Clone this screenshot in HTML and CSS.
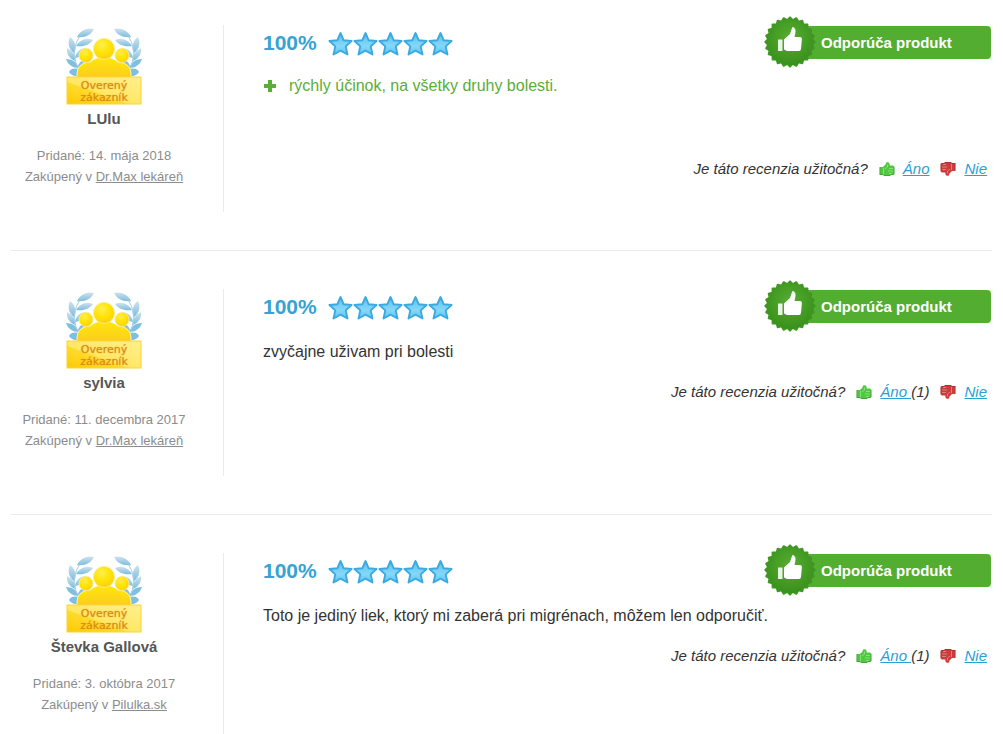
FILE: index.html
```html
<!DOCTYPE html>
<html lang="sk">
<head>
<meta charset="utf-8">
<meta name="viewport" content="width=device-width, initial-scale=1">
<title>Recenzie</title>
<link rel="stylesheet" href="styles.css">
</head>
<body>
<svg class="sprite" aria-hidden="true">
  <defs>
    <linearGradient id="g-star" x1="0" y1="0" x2="0" y2="1"><stop offset="0" stop-color="#5cc0ee"/><stop offset=".6" stop-color="#85d8f8"/><stop offset="1" stop-color="#5fc6f2"/></linearGradient>
    <radialGradient id="g-seal" cx=".5" cy=".4" r=".6"><stop offset="0" stop-color="#58ad32"/><stop offset="1" stop-color="#38911b"/></radialGradient>
    <radialGradient id="g-head" cx=".4" cy=".3" r=".75"><stop offset="0" stop-color="#fff04a"/><stop offset=".6" stop-color="#ffe000"/><stop offset="1" stop-color="#fbcb1c"/></radialGradient>
    <linearGradient id="g-body" x1="0" y1="0" x2="0" y2="1"><stop offset="0" stop-color="#ffe60c"/><stop offset="1" stop-color="#fbcb1f"/></linearGradient>
    <linearGradient id="g-banner" x1="0" y1="1" x2="1" y2="0"><stop offset="0" stop-color="#fdc904"/><stop offset=".4" stop-color="#ffdb2c"/><stop offset=".42" stop-color="#ffe762"/><stop offset="1" stop-color="#fff08f"/></linearGradient>
    <linearGradient id="g-leaf" x1="0" y1="0" x2="0" y2="1"><stop offset="0" stop-color="#d3e3ec"/><stop offset="1" stop-color="#78bce2"/></linearGradient>
  </defs>
  <symbol id="laurel" viewBox="0 0 38 52">
    <g fill="url(#g-leaf)">
      <path d="M28 1C20 -1 14 3 11 9 19 10 25 7 28 1Z"/>
      <path d="M27 12C20 9 14 12 10 18 18 19 23 17 27 12Z"/>
      <path d="M4 9C1 15 3 21 8 25 11 19 9 12 4 9Z"/>
      <path d="M20 20C14 20 10 24 9 30 15 29 19 26 20 20Z"/>
      <path d="M1 20C0 26 4 31 9 33 10 27 6 22 1 20Z"/>
    </g>
    <g fill="#7fbfe2">
      <path d="M0 31C2 37 7 40 13 40 11 34 6 31 0 31Z"/>
      <path d="M20 31C14 32 11 37 12 43 18 42 20 37 20 31Z"/>
      <path d="M3 44C6 39 12 40 16 44 13 50 6 49 3 44Z"/>
    </g>
    <path d="M17 4Q1 22 15 47" fill="none" stroke="#a6cfe4" stroke-width="1"/>
  </symbol>
  <symbol id="verified" viewBox="0 0 76 78">
    <use href="#laurel" width="38" height="52"/>
    <use href="#laurel" width="38" height="52" transform="translate(76 0) scale(-1 1)"/>
    <path d="M11 50V46Q11 37 20 34.500H56Q65 37 65 46V50Z" fill="url(#g-body)" stroke="#fff3a8"/>
    <circle cx="20" cy="27.500" r="7" fill="url(#g-head)" stroke="#ffec80"/>
    <circle cx="56" cy="27.500" r="7" fill="url(#g-head)" stroke="#ffec80"/>
    <path d="M21 50V42Q21 33 32 30H44Q55 33 55 42V50Z" fill="url(#g-body)"/>
    <circle cx="38" cy="21" r="10.500" fill="url(#g-head)" stroke="#ffec80"/>
    <rect x="1" y="49" width="74" height="27" fill="url(#g-banner)" stroke="#fbd33f"/>
  </symbol>
  <symbol id="star" viewBox="0 0 25 26">
    <path d="M12.500 2 15.700 9.300 23.600 10 17.700 15.400 19.500 23.500 12.500 19.600 5.500 23.500 7.300 15.400 1.400 10 9.300 9.300Z" fill="url(#g-star)" stroke="#3ba9e2" stroke-width="1.900" stroke-linejoin="round"/>
  </symbol>
  <symbol id="seal" viewBox="0 0 52 52">
    <g fill="#3f9622">
      <rect id="sq" x="7.600" y="7.600" width="36.800" height="36.800" rx="1"/>
      <use href="#sq" transform="rotate(15 26 26)"/><use href="#sq" transform="rotate(30 26 26)"/><use href="#sq" transform="rotate(45 26 26)"/><use href="#sq" transform="rotate(60 26 26)"/><use href="#sq" transform="rotate(75 26 26)"/>
    </g>
    <circle cx="26" cy="26" r="23" fill="url(#g-seal)"/>
    <path d="M14 23.500H18.500V35H14Z" fill="#e9f5e4"/>
    <path d="M20 23.500 26 18 28 12Q28.500 10.500 30 11.500 32 13 31.500 16L30.500 21H36Q38 21 37.900 23L37 33Q36.800 35 35 35H23L20 33.500Z" fill="#fff"/>
  </symbol>
  <symbol id="plus" viewBox="0 0 14 14"><path d="M5 1H9V5H13V9H9V13H5V9H1V5H5Z" fill="#5aae37"/></symbol>
  <symbol id="thumb" viewBox="0 0 16 16">
    <path d="M.500 6H4L6.500 3.500 7 1.500Q9.500.500 10.500 2.500L10.800 4.500H14Q15.800 5 15.500 7V13L14.500 14H12L11 15H5L4 14H.500Z" fill="currentColor"/>
    <path d="M.900 6.500V13.500H4M5 14.500H11L12 13.500H14.500L15 12.500V6" fill="none" stroke="#000" stroke-opacity=".16"/>
    <path d="M4.500 7V13M10 7.500H14M9 10H14M10 12.500H13M8.500 3.500V6L6 8" stroke="#fff" stroke-opacity=".35" fill="none"/>
  </symbol>
</svg>

<main class="reviews">
  <article class="review">
    <aside class="author">
      <div class="verified"><svg aria-hidden="true"><use href="#verified"/></svg><span class="verified-text">Overený zákazník</span></div>
      <strong class="name">LUlu</strong>
      <p class="meta">Pridané: 14. mája 2018<br>Zakúpený v <a href="#">Dr.Max lekáreň</a></p>
    </aside>
    <div class="content">
      <header class="top">
        <span class="score">100%</span>
        <span class="stars"><svg><use href="#star"/></svg><svg><use href="#star"/></svg><svg><use href="#star"/></svg><svg><use href="#star"/></svg><svg><use href="#star"/></svg></span>
        <div class="recommend"><svg class="seal"><use href="#seal"/></svg><strong class="ribbon">Odporúča produkt</strong></div>
      </header>
      <ul class="pros"><li><svg><use href="#plus"/></svg>rýchly účinok, na všetky druhy bolesti.</li></ul>
      <div class="useful"><span class="question">Je táto recenzia užitočná?</span><svg class="up"><use href="#thumb"/></svg><span class="vote"><a href="#">Áno</a></span><svg class="down"><use href="#thumb"/></svg><span class="vote"><a href="#">Nie</a></span></div>
    </div>
  </article>

  <article class="review">
    <aside class="author">
      <div class="verified"><svg aria-hidden="true"><use href="#verified"/></svg><span class="verified-text">Overený zákazník</span></div>
      <strong class="name">sylvia</strong>
      <p class="meta">Pridané: 11. decembra 2017<br>Zakúpený v <a href="#">Dr.Max lekáreň</a></p>
    </aside>
    <div class="content">
      <header class="top">
        <span class="score">100%</span>
        <span class="stars"><svg><use href="#star"/></svg><svg><use href="#star"/></svg><svg><use href="#star"/></svg><svg><use href="#star"/></svg><svg><use href="#star"/></svg></span>
        <div class="recommend"><svg class="seal"><use href="#seal"/></svg><strong class="ribbon">Odporúča produkt</strong></div>
      </header>
      <p class="text">zvyčajne uživam pri bolesti</p>
      <div class="useful"><span class="question">Je táto recenzia užitočná?</span><svg class="up"><use href="#thumb"/></svg><span class="vote"><a href="#">Áno&nbsp;</a>(1)</span><svg class="down"><use href="#thumb"/></svg><span class="vote"><a href="#">Nie</a></span></div>
    </div>
  </article>

  <article class="review">
    <aside class="author">
      <div class="verified"><svg aria-hidden="true"><use href="#verified"/></svg><span class="verified-text">Overený zákazník</span></div>
      <strong class="name">Števka Gallová</strong>
      <p class="meta">Pridané: 3. októbra 2017<br>Zakúpený v <a href="#">Pilulka.sk</a></p>
    </aside>
    <div class="content">
      <header class="top">
        <span class="score">100%</span>
        <span class="stars"><svg><use href="#star"/></svg><svg><use href="#star"/></svg><svg><use href="#star"/></svg><svg><use href="#star"/></svg><svg><use href="#star"/></svg></span>
        <div class="recommend"><svg class="seal"><use href="#seal"/></svg><strong class="ribbon">Odporúča produkt</strong></div>
      </header>
      <p class="text">Toto je jediný liek, ktorý mi zaberá pri migrénach, môžem len odporučiť.</p>
      <div class="useful"><span class="question">Je táto recenzia užitočná?</span><svg class="up"><use href="#thumb"/></svg><span class="vote"><a href="#">Áno&nbsp;</a>(1)</span><svg class="down"><use href="#thumb"/></svg><span class="vote"><a href="#">Nie</a></span></div>
    </div>
  </article>
</main>
</body>
</html>
```

FILE: styles.css
```css
* { box-sizing: border-box; }
body {
  margin: 0;
  background: #fff;
  color: #333;
  font: 16px/24px "Liberation Sans", Arial, sans-serif;
}
p, ul { margin: 0; padding: 0; list-style: none; }
svg { display: block; flex: none; }
.sprite { position: absolute; width: 0; height: 0; }

.reviews { padding: 0 11px; }
.review { display: flex; padding: 38px 0; border-bottom: 1px solid #ebebeb; }
.review:first-child { padding-top: 25px; }
.review:last-child { padding-bottom: 0; border-bottom: 0; }

.author {
  width: 213px;
  min-height: 187px;
  padding: 3px 26px 0 0;
  border-right: 1px solid #ebebeb;
  text-align: center;
}
.review:last-child .author { min-height: 181px; }
.verified { position: relative; width: 76px; height: 78px; margin: 0 auto; }
.verified svg { width: 76px; height: 78px; }
.verified-text {
  position: absolute;
  inset: auto 0 2px 0;
  color: #dd8a14;
  font: 11px/12px "DejaVu Sans", sans-serif;
  text-shadow: 0 0 1px #e9a030;
}
.name { display: block; color: #555; font-size: 15px; line-height: 26px; }
.meta { margin-top: 13px; color: #8c8c8c; font-size: 13px; line-height: 21px; white-space: nowrap; }
.meta a { color: inherit; }

.content { flex: 1; padding-left: 39px; }
.top { display: flex; align-items: center; height: 36px; }
.score { color: #36a3d3; font-size: 21px; font-weight: bold; }
.stars { display: flex; margin-left: 11px; padding-top: 2px; }
.stars svg { width: 25px; height: 26px; }

.recommend { display: flex; align-items: center; margin: 0 1px 2px auto; }
.seal { position: relative; width: 52px; height: 52px; }
.ribbon {
  width: 201px;
  margin-left: -26px;
  padding-left: 31px;
  border-radius: 4px;
  background: #53ad31;
  color: #fff;
  font-size: 15px;
  line-height: 33px;
}

.pros { min-height: 83px; margin-top: 13px; color: #5aae37; }
.pros li { display: flex; align-items: center; gap: 12px; }
.pros svg { width: 14px; height: 14px; }
.text { min-height: 40px; margin-top: 15px; }

.useful {
  display: flex;
  align-items: center;
  justify-content: flex-end;
  padding-right: 5px;
  font-size: 15px;
  line-height: 24px;
  font-style: italic;
}
.question { margin-right: 11px; }
.useful svg { width: 16px; height: 16px; margin-right: 8px; }
.useful a { color: #2b9fd0; }
.vote + svg { margin-left: 11px; }
.up { color: #50c840; }
.down { color: #cc3c3c; transform: rotate(180deg); }
```
